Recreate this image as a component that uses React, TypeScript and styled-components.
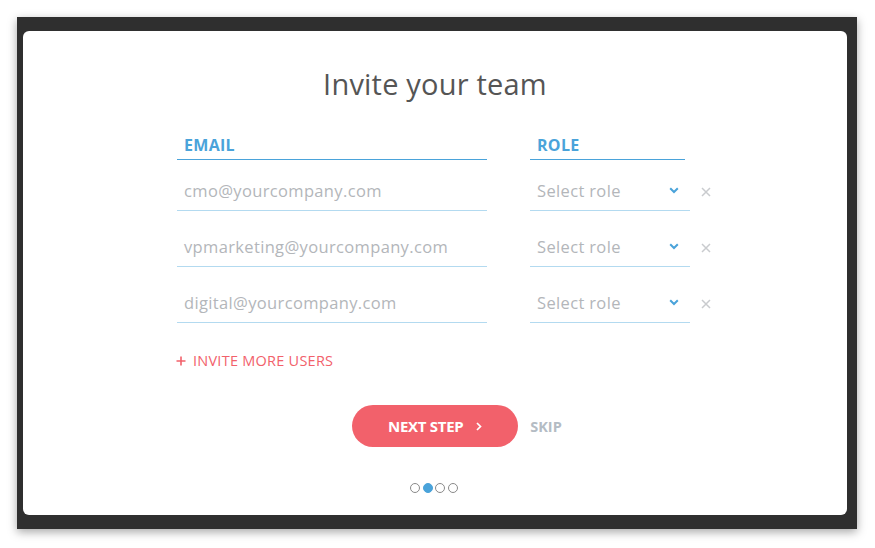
import React from 'react';
import styled, { createGlobalStyle } from 'styled-components';

const GlobalStyle = createGlobalStyle`
  html, body {
    margin: 0;
    padding: 0;
    background: #ffffff;
  }
  body {
    font-family: 'Open Sans', 'Liberation Sans', sans-serif;
  }
`;

const Page = styled.div`
  width: 875px;
  height: 548px;
  padding: 17px 0 0 17px;
  box-sizing: border-box;
`;

const Frame = styled.div`
  width: 840px;
  height: 512px;
  box-sizing: border-box;
  padding: 14px 10px 14px 6px;
  background: #2f2f2f;
  box-shadow: 0 3px 9px rgba(0, 0, 0, 0.35);
`;

const Modal = styled.div`
  height: 100%;
  background: #ffffff;
  border-radius: 6px;
  display: flex;
  flex-direction: column;
  align-items: center;
  padding-top: 36px;
  box-sizing: border-box;
`;

const Title = styled.h1`
  margin: 0;
  font-size: 29px;
  font-weight: 400;
  color: #555555;
  letter-spacing: 0.2px;
  line-height: 34px;
`;

const Form = styled.div`
  align-self: flex-start;
  margin: 34px 0 0 154px;
  display: grid;
  grid-template-columns: 310px 160px 22px;
  column-gap: 43px;
  & > :nth-child(3n + 3) {
    margin-left: -32px;
  }
`;

const HeaderCell = styled.div<{ $w: number }>`
  width: ${(p) => p.$w}px;
  box-sizing: border-box;
  padding: 0 0 4px 7px;
  margin-bottom: -5px;
  border-bottom: 1px solid #4aa3da;
  color: #4aa3da;
  font-weight: 700;
  font-size: 16px;
  line-height: 20px;
  letter-spacing: 0.3px;
`;

const Field = styled.div`
  height: 56px;
  box-sizing: border-box;
  border-bottom: 1px solid #b3daf0;
  display: flex;
  align-items: flex-end;
  padding: 0 7px 8px;
  font-size: 16.5px;
  line-height: 22px;
  color: #b3b6ba;
  letter-spacing: 0.35px;
`;

const SelectField = styled(Field)`
  justify-content: space-between;
  padding-right: 11px;
  & > svg {
    margin-bottom: 8px;
  }
`;

const RemoveBtn = styled.div`
  height: 56px;
  display: flex;
  align-items: flex-end;
  padding-bottom: 14px;
  box-sizing: border-box;
`;

const InviteMore = styled.div`
  align-self: flex-start;
  margin: 28px 0 0 153px;
  display: flex;
  align-items: center;
  gap: 7px;
  color: #f2616b;
  font-size: 14.5px;
  letter-spacing: 0.25px;
`;

const Actions = styled.div`
  display: flex;
  align-items: center;
  gap: 12px;
  margin-top: 35px;
  margin-left: 44px;
`;

const NextButton = styled.button`
  width: 166px;
  height: 42px;
  border: none;
  border-radius: 21px;
  background: #f2616b;
  color: #ffffff;
  font-family: inherit;
  font-weight: 700;
  font-size: 15px;
  letter-spacing: -0.3px;
  display: flex;
  align-items: center;
  justify-content: center;
  gap: 13px;
  padding: 0;
`;

const Skip = styled.span`
  color: #b4bcc4;
  font-weight: 700;
  font-size: 14.5px;
`;

const Dots = styled.div`
  display: flex;
  gap: 2.5px;
  margin-top: 36px;
  margin-left: -2px;
`;

const Dot = styled.span<{ $active?: boolean }>`
  width: 10px;
  height: 10px;
  box-sizing: border-box;
  border-radius: 50%;
  border: 1px solid ${(p) => (p.$active ? '#4aa3da' : '#8a8a8a')};
  background: ${(p) => (p.$active ? '#4aa3da' : '#ffffff')};
`;

const Chevron = () => (
  <svg width="10" height="7" viewBox="0 0 10 7">
    <path d="M1.2 1.2l3.8 3.8 3.8-3.8" fill="none" stroke="#4aa3da" strokeWidth="2" />
  </svg>
);

const Cross = () => (
  <svg width="10" height="10" viewBox="0 0 10 10">
    <path d="M1 1l8 8M9 1l-8 8" fill="none" stroke="#c9cbce" strokeWidth="1.5" />
  </svg>
);

const Plus = () => (
  <svg width="10" height="10" viewBox="0 0 10 10">
    <path d="M5 0.5v9M0.5 5h9" fill="none" stroke="#f2616b" strokeWidth="1.6" />
  </svg>
);

const ChevronRight = () => (
  <svg width="6" height="9" viewBox="0 0 6 9">
    <path d="M1 1l3.5 3.5L1 8" fill="none" stroke="#ffffff" strokeWidth="1.7" />
  </svg>
);

const invites = [
  'cmo@yourcompany.com',
  'vpmarketing@yourcompany.com',
  'digital@yourcompany.com',
];

export default function App() {
  return (
    <>
      <GlobalStyle />
      <Page>
        <Frame>
          <Modal>
            <Title>Invite your team</Title>
            <Form>
              <HeaderCell $w={310}>EMAIL</HeaderCell>
              <HeaderCell $w={155}>ROLE</HeaderCell>
              <div />
              {invites.map((email) => (
                <React.Fragment key={email}>
                  <Field>{email}</Field>
                  <SelectField>
                    Select role
                    <Chevron />
                  </SelectField>
                  <RemoveBtn>
                    <Cross />
                  </RemoveBtn>
                </React.Fragment>
              ))}
            </Form>
            <InviteMore>
              <Plus />
              INVITE MORE USERS
            </InviteMore>
            <Actions>
              <NextButton>
                NEXT STEP
                <ChevronRight />
              </NextButton>
              <Skip>SKIP</Skip>
            </Actions>
            <Dots>
              <Dot />
              <Dot $active />
              <Dot />
              <Dot />
            </Dots>
          </Modal>
        </Frame>
      </Page>
    </>
  );
}
